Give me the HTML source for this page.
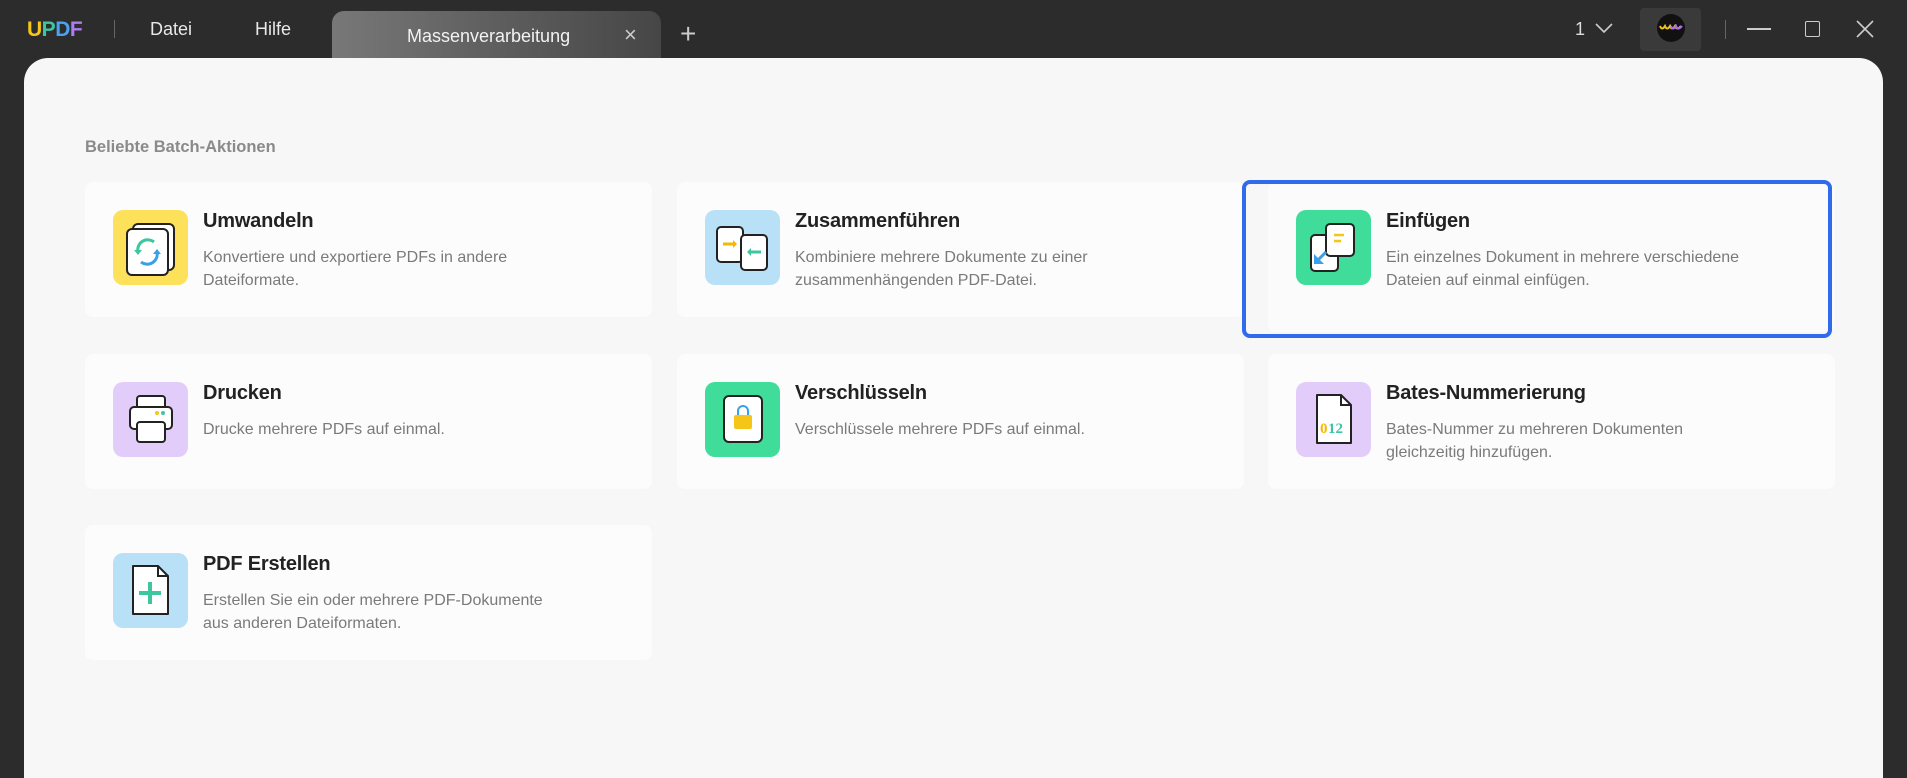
<!DOCTYPE html>
<html><head><meta charset="utf-8"><style>
*{margin:0;padding:0;box-sizing:border-box}
body{width:1907px;height:762px;overflow:hidden;background:#2c2c2c;font-family:"Liberation Sans",sans-serif;position:relative}
.a{position:absolute}
.tb{color:#e8e8e8;font-size:18px}
.panel{left:24px;top:58px;width:1859px;height:720px;background:#f7f7f8;border-radius:24px 24px 0 0}
.card{position:absolute;width:567px;height:135px;background:#fcfcfc;border-radius:8px}
.ic{position:absolute;left:28px;top:28px;width:75px;height:75px;border-radius:10px}
.t{position:absolute;left:118px;top:28px;font-size:20px;font-weight:bold;color:#222;letter-spacing:-0.2px}
.d{position:absolute;left:118px;top:64px;font-size:16px;color:#7a7a7a;line-height:23px;width:440px;white-space:nowrap}
</style></head><body>
<div class="a" style="left:27px;top:18px;font-size:21px;font-weight:bold;letter-spacing:-0.5px"><span style="color:#f5c518">U</span><span style="color:#3ec6a0">P</span><span style="color:#4aa3f0">D</span><span style="color:#b07cf2">F</span></div>
<div class="a" style="left:114px;top:20px;width:1px;height:18px;background:#666"></div>
<div class="a tb" style="left:150px;top:19px">Datei</div>
<div class="a tb" style="left:255px;top:19px">Hilfe</div>
<div class="a" style="left:332px;top:11px;width:329px;height:50px;border-radius:12px 12px 0 0;background:linear-gradient(90deg,#787878,#5e5e5e 50%,#464646)"></div>
<div class="a tb" style="left:407px;top:26px;color:#f2f2f2">Massenverarbeitung</div>
<div class="a tb" style="left:624px;top:22px;font-size:22px;color:#ccc">×</div>
<div class="a tb" style="left:680px;top:18px;font-size:28px;font-weight:300;color:#ccc">+</div>
<div class="a tb" style="left:1575px;top:19px;color:#ddd">1</div>
<svg class="a" style="left:1594px;top:22px" width="20" height="12"><path d="M2 2l8 8 8-8" stroke="#ccc" stroke-width="1.6" fill="none"/></svg>
<div class="a" style="left:1640px;top:8px;width:61px;height:43px;background:#3a3a3a;border-radius:4px"></div>
<div class="a" style="left:1657px;top:14px;width:28px;height:28px;border-radius:50%;background:#111"></div>
<svg class="a" style="left:1659px;top:24px" width="24" height="8"><path d="M1 2q2 5 5 0q2 5 5 0q2 5 5 0q2 5 6 0" stroke="#f5c518" stroke-width="2" fill="none"/><path d="M12 2q2 5 5 0q2 5 6 0" stroke="#a56cf0" stroke-width="2" fill="none"/></svg>
<div class="a" style="left:1725px;top:20px;width:1px;height:19px;background:#666"></div>
<div class="a" style="left:1747px;top:28px;width:24px;height:2px;background:#ccc"></div>
<div class="a" style="left:1805px;top:21px;width:15px;height:16px;border:1.6px solid #ccc;border-radius:2px"></div>
<svg class="a" style="left:1856px;top:20px" width="18" height="18"><path d="M1 1l16 16M17 1L1 17" stroke="#ccc" stroke-width="1.6"/></svg>

<div class="a panel"></div>
<div class="a" style="left:85px;top:138px;font-size:16.5px;font-weight:bold;color:#8a8a8a">Beliebte Batch-Aktionen</div>

<div class="card" style="left:85px;top:182px">
 <div class="ic" style="background:#fde15a"><svg width="75" height="75"><rect x="20" y="14" width="41" height="46" rx="5" fill="#fff" stroke="#222" stroke-width="2"/><rect x="14" y="19" width="41" height="46" rx="5" fill="#fff" stroke="#222" stroke-width="2"/><path d="M25 42a10 10 0 0 1 16-10" stroke="#3ec6a0" stroke-width="3" fill="none"/><path d="M44 42a10 10 0 0 1-16 10" stroke="#3aa0e8" stroke-width="3" fill="none"/><path d="M21 40l4 5 4-5z" fill="#3ec6a0"/><path d="M40 44l4-5 4 5z" fill="#3aa0e8"/></svg></div>
 <div class="t">Umwandeln</div><div class="d">Konvertiere und exportiere PDFs in andere<br>Dateiformate.</div></div>
<div class="card" style="left:677px;top:182px">
 <div class="ic" style="background:#b8e1f8"><svg width="75" height="75"><rect x="12" y="17" width="26" height="35" rx="4" fill="#fff" stroke="#222" stroke-width="2"/><rect x="36" y="25" width="26" height="35" rx="4" fill="#fff" stroke="#222" stroke-width="2"/><path d="M18 34h12" stroke="#f5b800" stroke-width="3"/><path d="M28 30l4 4-4 4" fill="#f5b800"/><path d="M56 42H44" stroke="#3ec6a0" stroke-width="3"/><path d="M46 38l-4 4 4 4" fill="#3ec6a0"/></svg></div>
 <div class="t">Zusammenführen</div><div class="d">Kombiniere mehrere Dokumente zu einer<br>zusammenhängenden PDF-Datei.</div></div>
<div class="card" style="left:1268px;top:182px;height:150px;background:#fbfbfb">
 <div class="ic" style="background:#3fdc9a"><svg width="75" height="75"><rect x="15" y="25" width="27" height="36" rx="4" fill="#fff" stroke="#222" stroke-width="2"/><rect x="30" y="14" width="28" height="32" rx="4" fill="#fff" stroke="#222" stroke-width="2"/><path d="M38 25h10M38 31h7" stroke="#f5c518" stroke-width="2.5"/><path d="M30 42L20 52" stroke="#3aa0e8" stroke-width="3"/><path d="M18 44v10h10z" fill="#3aa0e8"/></svg></div>
 <div class="t">Einfügen</div><div class="d">Ein einzelnes Dokument in mehrere verschiedene<br>Dateien auf einmal einfügen.</div></div>
<div class="a" style="left:1242px;top:180px;width:590px;height:158px;border:4px solid #2f6bea;border-radius:8px"></div>

<div class="card" style="left:85px;top:354px">
 <div class="ic" style="background:#e2cdfa"><svg width="75" height="75"><rect x="24" y="14" width="28" height="14" rx="3" fill="#fff" stroke="#222" stroke-width="2"/><rect x="17" y="25" width="42" height="22" rx="4" fill="#fff" stroke="#222" stroke-width="2"/><rect x="24" y="40" width="28" height="20" rx="3" fill="#fff" stroke="#222" stroke-width="2"/><circle cx="44" cy="31" r="2" fill="#f5c518"/><circle cx="50" cy="31" r="2" fill="#3ec6a0"/></svg></div>
 <div class="t">Drucken</div><div class="d">Drucke mehrere PDFs auf einmal.</div></div>
<div class="card" style="left:677px;top:354px">
 <div class="ic" style="background:#3fdc9a"><svg width="75" height="75"><rect x="19" y="14" width="38" height="46" rx="5" fill="#fff" stroke="#222" stroke-width="2"/><path d="M33 33v-4a5 5 0 0 1 10 0v4" stroke="#3aa0e8" stroke-width="2" fill="none"/><rect x="29" y="33" width="18" height="14" rx="2" fill="#f5c518"/></svg></div>
 <div class="t">Verschlüsseln</div><div class="d">Verschlüssele mehrere PDFs auf einmal.</div></div>
<div class="card" style="left:1268px;top:354px">
 <div class="ic" style="background:#e2cdfa"><svg width="75" height="75"><path d="M21 13h24l10 10v38H21z" fill="#fff" stroke="#222" stroke-width="2" stroke-linejoin="round"/><path d="M45 13v10h10" fill="none" stroke="#222" stroke-width="2"/><text x="24" y="51" font-family="Liberation Serif,serif" font-size="15" font-weight="bold" fill="#f5b800">0</text><text x="32" y="51" font-family="Liberation Serif,serif" font-size="15" font-weight="bold" fill="#3ec6a0">12</text></svg></div>
 <div class="t">Bates-Nummerierung</div><div class="d">Bates-Nummer zu mehreren Dokumenten<br>gleichzeitig hinzufügen.</div></div>

<div class="card" style="left:85px;top:525px">
 <div class="ic" style="background:#b8e1f8"><svg width="75" height="75"><path d="M20 13h25l10 10v38H20z" fill="#fff" stroke="#222" stroke-width="2" stroke-linejoin="round"/><path d="M45 13v10h10" fill="none" stroke="#222" stroke-width="2"/><path d="M37 29v22M26 40h22" stroke="#3ec6a0" stroke-width="4"/></svg></div>
 <div class="t">PDF Erstellen</div><div class="d">Erstellen Sie ein oder mehrere PDF-Dokumente<br>aus anderen Dateiformaten.</div></div>
</body></html>
